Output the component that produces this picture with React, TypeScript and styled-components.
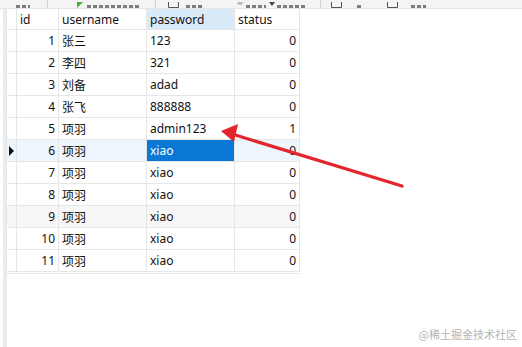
import React from 'react';
import styled, { createGlobalStyle } from 'styled-components';

const GlobalStyle = createGlobalStyle`
  html, body { margin: 0; padding: 0; background: #fff; }
  body { font-family: "Noto Sans", "Noto Sans CJK SC", sans-serif; }
`;

type Row = { id: number; username: string; password: string; status: number };

const rows: Row[] = [
  { id: 1, username: '张三', password: '123', status: 0 },
  { id: 2, username: '李四', password: '321', status: 0 },
  { id: 3, username: '刘备', password: 'adad', status: 0 },
  { id: 4, username: '张飞', password: '888888', status: 0 },
  { id: 5, username: '项羽', password: 'admin123', status: 1 },
  { id: 6, username: '项羽', password: 'xiao', status: 0 },
  { id: 7, username: '项羽', password: 'xiao', status: 0 },
  { id: 8, username: '项羽', password: 'xiao', status: 0 },
  { id: 9, username: '项羽', password: 'xiao', status: 0 },
  { id: 10, username: '项羽', password: 'xiao', status: 0 },
  { id: 11, username: '项羽', password: 'xiao', status: 0 },
];

const SELECTED = 6;
const HOVER = 9;

export default function App() {
  return (
    <Page>
      <GlobalStyle />
      <Toolbar>
        <ToolText $ml={16} $w={14} />
        <Sep $ml={17} />
        <Slot $ml={29}><PlayIcon /></Slot>
        <ToolText $ml={3} $w={54} />
        <Sep $ml={14} />
        <Slot $ml={12}><BoxIcon /></Slot>
        <ToolText $ml={7} $w={17} />
        <Slot $ml={34}><DotIcon /></Slot>
        <ToolText $ml={3} $w={20} />
        <Slot $ml={3}><DiamondIcon /></Slot>
        <ToolText $ml={2} $w={28} />
        <Sep $ml={15} />
        <Slot $ml={10}><BoxIcon /></Slot>
        <ToolText $ml={15} $w={6} />
        <Slot $ml={24}><BoxIcon /></Slot>
        <ToolText $ml={13} $w={15} />
      </Toolbar>
      <Main>
        <LeftStrip />
        <Grid>
          <HeadCell />
          <HeadCell>id</HeadCell>
          <HeadCell>username</HeadCell>
          <HeadCell $active>password</HeadCell>
          <HeadCell>status</HeadCell>
          {rows.map((r) => {
            const tone = r.id === SELECTED ? 'sel' : r.id === HOVER ? 'hover' : 'none';
            return (
              <React.Fragment key={r.id}>
                <Cell $tone={tone}>{r.id === SELECTED && <Caret />}</Cell>
                <Cell $tone={tone} $right>{r.id}</Cell>
                <Cell $tone={tone}>{r.username}</Cell>
                <Cell $tone={r.id === SELECTED ? 'focus' : tone}>{r.password}</Cell>
                <Cell $tone={tone} $right>{r.status}</Cell>
              </React.Fragment>
            );
          })}
        </Grid>
      </Main>
      <Arrow width="522" height="347" viewBox="0 0 522 347">
        <line x1="402" y1="186" x2="232" y2="134" stroke="#e3262c" strokeWidth="3.2" strokeLinecap="round" />
        <polygon points="221,131 238,124 234,142" fill="#e3262c" />
      </Arrow>
      <Watermark>@稀土掘金技术社区</Watermark>
    </Page>
  );
}

function PlayIcon() {
  return (
    <svg width="7" height="6" viewBox="0 0 7 6">
      <polygon points="0,0 6,0 0,6" fill="#4caf33" />
    </svg>
  );
}

function BoxIcon() {
  return (
    <svg width="11" height="6" viewBox="0 0 11 6">
      <path d="M0.5 0 V5.5 H10.5 V0" fill="none" stroke="#555" />
    </svg>
  );
}

function DotIcon() {
  return (
    <svg width="6" height="6" viewBox="0 0 6 6">
      <circle cx="3" cy="0" r="3" fill="#bbb" />
    </svg>
  );
}

function DiamondIcon() {
  return (
    <svg width="6" height="6" viewBox="0 0 6 6">
      <polygon points="0,0 6,0 3,4" fill="#444" />
    </svg>
  );
}

const Page = styled.div`
  position: relative;
  width: 522px;
  height: 347px;
  overflow: hidden;
  background: #fff;
`;

const Toolbar = styled.div`
  display: flex;
  align-items: flex-end;
  height: 8px;
  background: #f4f4f4;
  border-bottom: 1px solid #e6e6e6;
  overflow: hidden;
`;

const Slot = styled.div<{ $ml: number }>`
  display: flex;
  align-items: flex-end;
  margin-left: ${(p) => p.$ml}px;
  height: 8px;
`;

const ToolText = styled.div<{ $ml: number; $w: number }>`
  width: ${(p) => p.$w}px;
  height: 3px;
  margin-left: ${(p) => p.$ml}px;
  background: repeating-linear-gradient(90deg, #555 0 4px, transparent 4px 6px);
  opacity: 0.75;
`;

const Sep = styled.div<{ $ml: number }>`
  width: 1px;
  height: 8px;
  background: #d0d0d0;
  margin-left: ${(p) => p.$ml}px;
`;

const Main = styled.div`
  display: flex;
  height: 338px;
`;

const LeftStrip = styled.div`
  width: 4px;
  margin-left: 3px;
  background: #ececec;
`;

const Grid = styled.div`
  display: grid;
  grid-template-columns: 10px 42px 88px 88px 65px;
  grid-auto-rows: 22px;
  grid-template-rows: 21px;
  align-content: start;
  border-left: 1px solid #e6e6e6;
  margin-left: -1px;
  height: 264px;
  border-bottom: 1px solid #e6e6e6;
`;

const HeadCell = styled.div<{ $active?: boolean }>`
  display: flex;
  align-items: center;
  padding: 1px 3px 0;
  font-size: 12px;
  color: #111;
  background: ${(p) => (p.$active ? '#d9eaf9' : '#fff')};
  border-right: 1px solid #e6e6e6;
  border-bottom: 1px solid #e6e6e6;
  box-sizing: border-box;
  white-space: nowrap;
`;

const toneBg: Record<string, string> = {
  none: '#fff',
  hover: '#f7f7f7',
  sel: '#edf5fd',
  focus: '#0a78d4',
};

const Cell = styled.div<{ $tone: string; $right?: boolean }>`
  display: flex;
  align-items: center;
  justify-content: ${(p) => (p.$right ? 'flex-end' : 'flex-start')};
  padding: 0 3px;
  font-size: 12px;
  color: ${(p) => (p.$tone === 'focus' ? '#fff' : '#111')};
  background: ${(p) => toneBg[p.$tone]};
  border-right: 1px solid #e6e6e6;
  border-bottom: 1px solid #e6e6e6;
  box-sizing: border-box;
  white-space: nowrap;
  &:nth-child(5n + 1) { padding: 0 0 0 2px; }
`;

const Caret = styled.span`
  width: 0;
  height: 0;
  border-top: 5px solid transparent;
  border-bottom: 5px solid transparent;
  border-left: 5px solid #111;
`;

const Arrow = styled.svg`
  position: absolute;
  left: 0;
  top: 0;
  pointer-events: none;
`;

const Watermark = styled.div`
  position: absolute;
  right: 5px;
  bottom: 5px;
  font-size: 11px;
  color: #b4b4b4;
  font-family: "Noto Sans CJK SC", sans-serif;
`;
